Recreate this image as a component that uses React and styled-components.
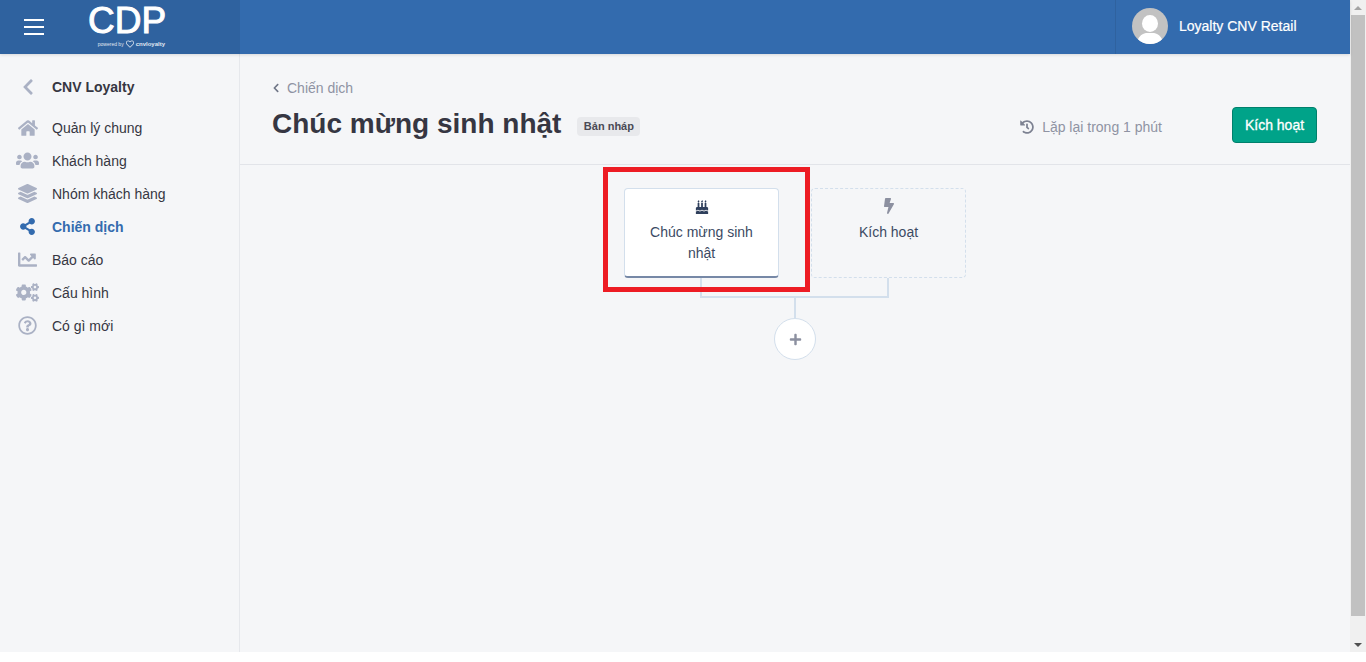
import React from "react";
import styled, { createGlobalStyle } from "styled-components";
import {
  FaHome,
  FaUsers,
  FaLayerGroup,
  FaShareAlt,
  FaChartLine,
  FaCogs,
  FaRegQuestionCircle,
  FaChevronLeft,
  FaHistory,
  FaBirthdayCake,
  FaBolt,
  FaPlus,
  FaRegHeart,
} from "react-icons/fa";

const GlobalStyle = createGlobalStyle`
  * { box-sizing: border-box; }
  html, body { margin: 0; padding: 0; height: 100%; overflow: hidden; background: #fff; }
  body { font-family: "Liberation Sans", Arial, sans-serif; font-size: 14px; color: #363642; }
`;

const Screen = styled.div`
  width: 1366px;
  height: 662px;
  display: flex;
  flex-direction: column;
  background: #fff;
`;

const Viewport = styled.div`
  height: 652px;
  display: flex;
`;

const Page = styled.div`
  width: 1350px;
  display: flex;
  flex-direction: column;
  background: #f5f6f8;
`;

/* Top bar */
const TopBar = styled.header`
  height: 54px;
  flex-shrink: 0;
  display: flex;
  justify-content: space-between;
  background: #336bae;
  box-shadow: 0 1px 3px rgba(0, 0, 0, 0.12);
  position: relative;
  z-index: 2;
`;

const Brand = styled.div`
  width: 240px;
  display: flex;
  background: #2f629f;
`;

const Burger = styled.button`
  width: 88px;
  padding: 0 0 0 24px;
  border: none;
  background: none;
  display: flex;
  flex-direction: column;
  justify-content: center;
  gap: 5px;
  span {
    display: block;
    width: 20px;
    height: 2px;
    background: #fff;
  }
`;

const Logo = styled.div`
  width: 78px;
  display: flex;
  flex-direction: column;
  align-items: flex-end;
  color: #fff;
`;

const LogoMark = styled.div`
  font-size: 37px;
  line-height: 38px;
  margin-top: 2px;
  width: 78px;
  display: flex;
  justify-content: center;
  -webkit-text-stroke: 1px #fff;
`;

const LogoSub = styled.div`
  display: flex;
  align-items: center;
  gap: 2px;
  font-size: 5px;
  line-height: 8px;
  margin: 0 1px 0 0;
  white-space: nowrap;
  opacity: 0.85;
  svg { font-size: 8px; }
  b { font-size: 6px; }
`;

const UserBox = styled.div`
  width: 235px;
  display: flex;
  align-items: center;
  gap: 11px;
  padding: 0 0 2px 16px;
  border-left: 1px solid #2f629f;
  color: #fff;
`;

const Avatar = styled.svg`
  width: 36px;
  height: 36px;
  display: block;
`;

const UserName = styled.span`
  font-size: 14px;
  -webkit-text-stroke: 0.2px #fff;
`;

/* Body */
const Body = styled.div`
  flex: 1;
  display: flex;
  min-height: 0;
`;

const Sidebar = styled.nav`
  width: 240px;
  flex-shrink: 0;
  border-right: 1px solid #e6e8ec;
  padding-top: 17px;
`;

const SideTitle = styled.div`
  height: 32px;
  display: flex;
  align-items: center;
  font-weight: bold;
  color: #363642;
  margin-bottom: 8px;
`;

const SideIcon = styled.span`
  width: 52px;
  flex-shrink: 0;
  display: flex;
  justify-content: center;
  padding-left: 3px;
  font-size: ${(p) => p.$size || 20}px;
  color: ${(p) => (p.$active ? "#336bae" : "#aab1c4")};
  svg { display: block; }
`;

const SideList = styled.ul`
  list-style: none;
  margin: 0;
  padding: 0;
`;

const SideItem = styled.li`
  height: 33px;
  display: flex;
  align-items: center;
  font-weight: ${(p) => (p.$active ? "bold" : "normal")};
  color: ${(p) => (p.$active ? "#336bae" : "#363642")};
`;

const Content = styled.main`
  flex: 1;
  min-width: 0;
`;

const PageHead = styled.div`
  height: 111px;
  padding: 26px 33px 0 32px;
  border-bottom: 1px solid #e2e4e9;
  display: flex;
  justify-content: space-between;
`;

const Crumb = styled.div`
  display: flex;
  align-items: center;
  gap: 6px;
  height: 16px;
  color: #8f93a3;
  svg { font-size: 10px; color: #6f7687; margin-left: -1px; }
`;

const TitleRow = styled.div`
  display: flex;
  align-items: center;
  gap: 16px;
  margin-top: 10px;
`;

const Title = styled.h1`
  margin: 0;
  font-size: 28px;
  line-height: 36px;
  font-weight: bold;
  color: #363642;
`;

const Badge = styled.span`
  width: 63px;
  height: 19px;
  margin-top: 4px;
  display: flex;
  align-items: center;
  justify-content: center;
  font-size: 11px;
  font-weight: bold;
  color: #4a4a55;
  background: #e8e9ec;
  border-radius: 4px;
`;

const HeadRight = styled.div`
  display: flex;
  align-items: flex-start;
  padding-top: 27px;
`;

const Repeat = styled.div`
  display: flex;
  align-items: center;
  gap: 8px;
  height: 36px;
  padding-top: 4px;
  margin-right: 70px;
  color: #8f93a3;
  svg { font-size: 14px; color: #7d8292; }
`;

const ActivateBtn = styled.button`
  width: 85px;
  height: 36px;
  padding: 0;
  font-family: inherit;
  font-size: 14px;
  font-weight: normal;
  -webkit-text-stroke: 0.3px #fff;
  color: #fff;
  background: #00a389;
  border: 1px solid #00806c;
  border-radius: 4px;
`;

/* Flow tree */
const Flow = styled.div`
  display: flex;
  flex-direction: column;
  align-items: center;
  padding-top: 23px;
`;

const CardRow = styled.div`
  display: flex;
  gap: 32px;
`;

const Card = styled.div`
  position: relative;
  width: 155px;
  height: 90px;
  padding: 10px 12px 0;
  display: flex;
  flex-direction: column;
  align-items: center;
  text-align: center;
  line-height: 21px;
  color: #3b4a63;
  border-radius: 4px;
  background: ${(p) => (p.$dashed ? "transparent" : "#fff")};
  border: 1px ${(p) => (p.$dashed ? "dashed" : "solid")} #d3dfec;
  ${(p) => !p.$dashed && "border-bottom: 2px solid #7688a6;"}
`;

const CardIcon = styled.span`
  height: 15px;
  margin-bottom: 8px;
  display: flex;
  align-items: flex-end;
  font-size: ${(p) => p.$size}px;
  color: ${(p) => p.$color};
  svg { display: block; }
`;

const Highlight = styled.div`
  position: absolute;
  left: -22px;
  top: -22px;
  width: 207px;
  height: 125px;
  border: 5px solid #ed1c24;
  pointer-events: none;
`;

const Branch = styled.div`
  width: 189px;
  height: 20px;
  margin-right: 1px;
  border: 2px solid #d3dfec;
  border-top: none;
`;

const Stem = styled.div`
  width: 2px;
  height: 20px;
  background: #d3dfec;
`;

const AddBtn = styled.button`
  width: 42px;
  height: 42px;
  padding: 0;
  display: flex;
  align-items: center;
  justify-content: center;
  border: 1px solid #d3dfec;
  border-radius: 50%;
  background: #fff;
  color: #8c90a0;
  font-size: 13px;
`;

/* Browser scrollbar */
const ScrollBar = styled.div`
  width: 16px;
  display: flex;
  flex-direction: column;
  align-items: center;
  background: #f0f0f0;
`;

const ScrollArrow = styled.div`
  height: 15px;
  flex-shrink: 0;
  display: flex;
  align-items: center;
  justify-content: center;
  &::before {
    content: "";
    border-left: 4px solid transparent;
    border-right: 4px solid transparent;
    ${(p) => (p.$down ? "border-top: 4px solid #505050;" : "border-bottom: 4px solid #a3a3a3;")}
  }
`;

const ScrollThumb = styled.div`
  width: 14px;
  height: 601px;
  background: #c1c1c1;
`;

const ScrollGap = styled.div`
  flex: 1;
`;

const menu = [
  { label: "Quản lý chung", Icon: FaHome, size: 20 },
  { label: "Khách hàng", Icon: FaUsers, size: 23 },
  { label: "Nhóm khách hàng", Icon: FaLayerGroup, size: 19 },
  { label: "Chiến dịch", Icon: FaShareAlt, size: 17, active: true },
  { label: "Báo cáo", Icon: FaChartLine, size: 19 },
  { label: "Cấu hình", Icon: FaCogs, size: 23 },
  { label: "Có gì mới", Icon: FaRegQuestionCircle, size: 19 },
];

const App = () => (
  <>
    <GlobalStyle />
    <Screen>
      <Viewport>
        <Page>
          <TopBar>
            <Brand>
              <Burger aria-label="menu">
                <span />
                <span />
                <span />
              </Burger>
              <Logo>
                <LogoMark>CDP</LogoMark>
                <LogoSub>
                  powered by <FaRegHeart /> <b>cnvloyalty</b>
                </LogoSub>
              </Logo>
            </Brand>
            <UserBox>
              <Avatar viewBox="0 0 36 36">
                <defs>
                  <clipPath id="avatarClip">
                    <circle cx="18" cy="18" r="18" />
                  </clipPath>
                </defs>
                <circle cx="18" cy="18" r="18" fill="#c2c2c2" />
                <g clipPath="url(#avatarClip)" fill="#fff">
                  <ellipse cx="18" cy="15.5" rx="8" ry="8.5" />
                  <path d="M5 36c0-6 4-10 9-11h8c5 1 9 5 9 11z" />
                </g>
              </Avatar>
              <UserName>Loyalty CNV Retail</UserName>
            </UserBox>
          </TopBar>
          <Body>
            <Sidebar>
              <SideTitle>
                <SideIcon $size={18}>
                  <FaChevronLeft />
                </SideIcon>
                CNV Loyalty
              </SideTitle>
              <SideList>
                {menu.map(({ label, Icon, size, active }) => (
                  <SideItem key={label} $active={active}>
                    <SideIcon $size={size} $active={active}>
                      <Icon />
                    </SideIcon>
                    {label}
                  </SideItem>
                ))}
              </SideList>
            </Sidebar>
            <Content>
              <PageHead>
                <div>
                  <Crumb>
                    <FaChevronLeft />
                    Chiến dịch
                  </Crumb>
                  <TitleRow>
                    <Title>Chúc mừng sinh nhật</Title>
                    <Badge>Bản nháp</Badge>
                  </TitleRow>
                </div>
                <HeadRight>
                  <Repeat>
                    <FaHistory />
                    Lặp lại trong 1 phút
                  </Repeat>
                  <ActivateBtn>Kích hoạt</ActivateBtn>
                </HeadRight>
              </PageHead>
              <Flow>
                <CardRow>
                  <Card>
                    <CardIcon $size={14} $color="#2f3f5c">
                      <FaBirthdayCake />
                    </CardIcon>
                    Chúc mừng sinh nhật
                    <Highlight />
                  </Card>
                  <Card $dashed>
                    <CardIcon $size={16} $color="#8c90a0">
                      <FaBolt />
                    </CardIcon>
                    Kích hoạt
                  </Card>
                </CardRow>
                <Branch />
                <Stem />
                <AddBtn aria-label="add">
                  <FaPlus />
                </AddBtn>
              </Flow>
            </Content>
          </Body>
        </Page>
        <ScrollBar>
          <ScrollArrow />
          <ScrollThumb />
          <ScrollGap />
          <ScrollArrow $down />
        </ScrollBar>
      </Viewport>
    </Screen>
  </>
);

export default App;
